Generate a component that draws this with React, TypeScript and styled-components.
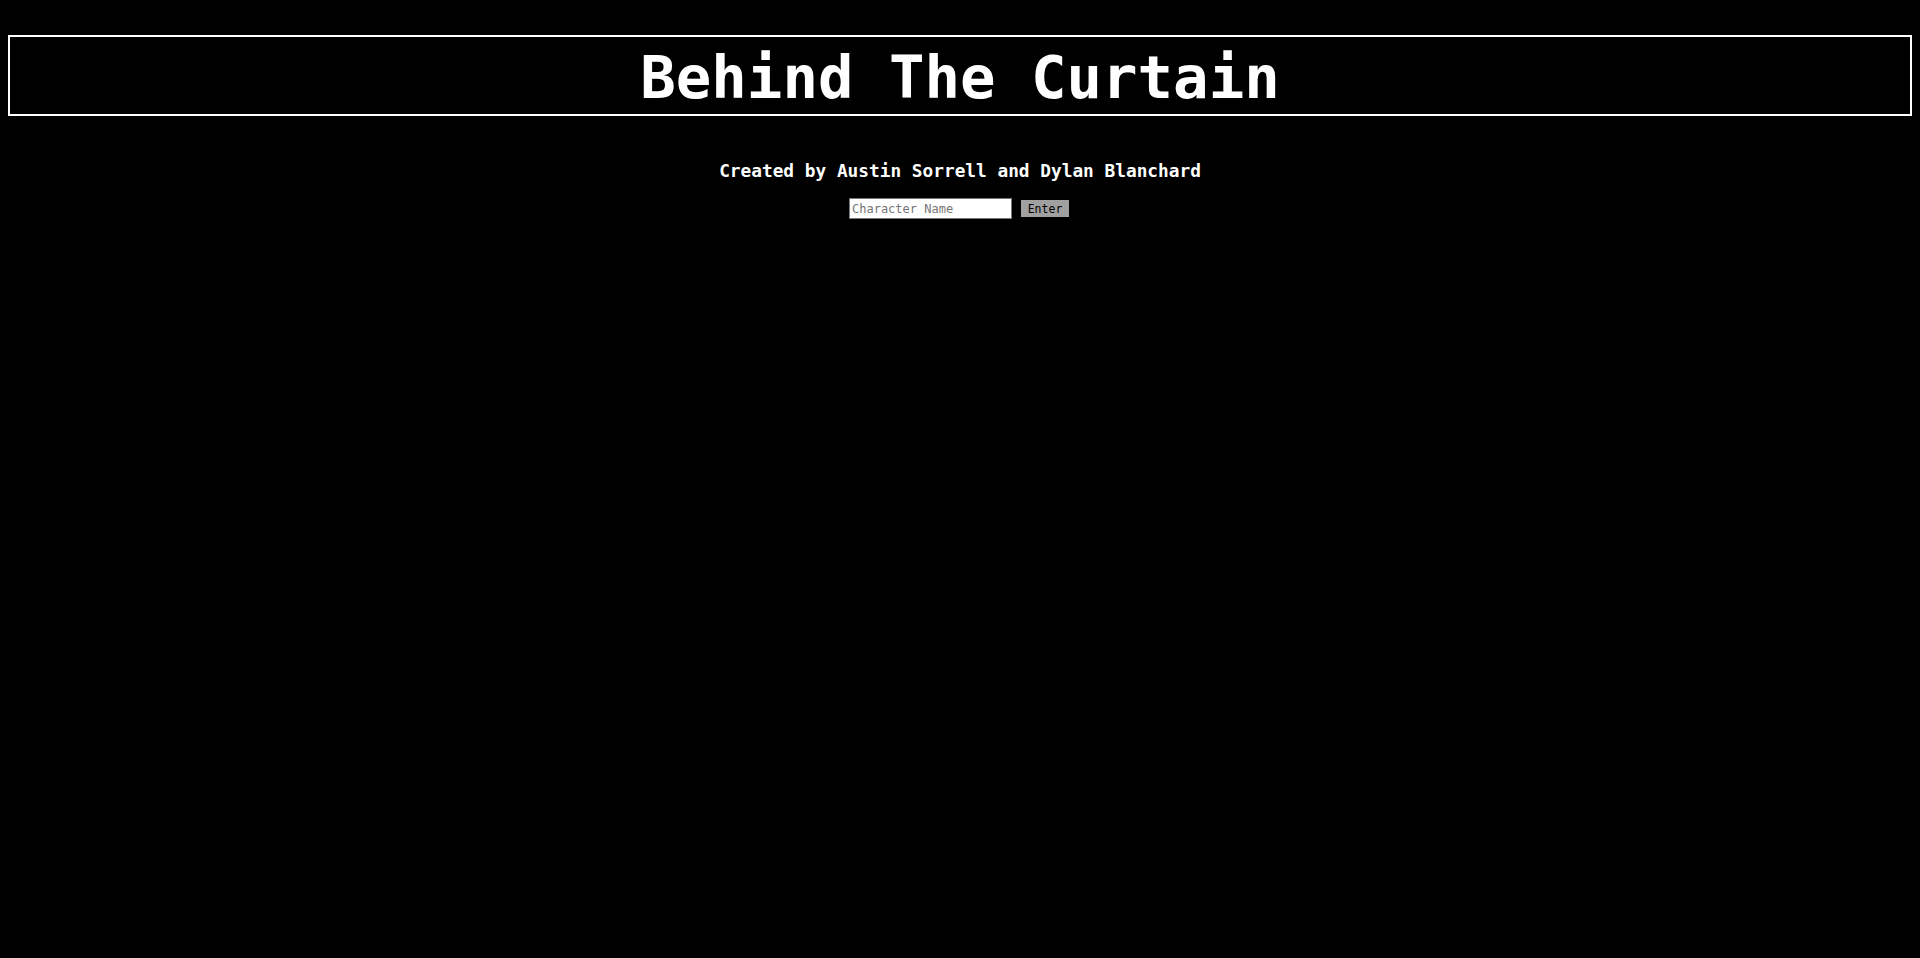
import React from "react";
import styled, { createGlobalStyle } from "styled-components";

const Global = createGlobalStyle`
  html, body { background: #000; }
  body { margin: 8px; color: #fff; font-family: "DejaVu Sans Mono", monospace; }
`;

const TitleBox = styled.h1`
  margin: 27px 0 0;
  padding-top: 4px;
  box-sizing: content-box;
  height: 73px;
  border: 2px solid #fff;
  display: flex;
  justify-content: center;
  line-height: 73px;
  font-weight: bold;
  font-size: 59px;
  font-family: "DejaVu Sans Mono", monospace;
  white-space: nowrap;
`;

const Credits = styled.h3`
  margin: 44px 0 0;
  text-align: center;
  font-size: 17.8px;
  line-height: 21px;
  font-weight: bold;
  font-family: "DejaVu Sans Mono", monospace;
`;

const Row = styled.form`
  margin-top: 17px;
  display: flex;
  justify-content: center;
  align-items: center;
  gap: 9px;
  padding-right: 2px;
`;

const NameInput = styled.input`
  box-sizing: border-box;
  width: 163px;
  height: 21px;
  border: 1px solid #767676;
  background: #fff;
  padding: 0 2px;
  font-family: "DejaVu Sans Mono", monospace;
  font-size: 12px;
  color: #000;
  outline: none;
  &::placeholder { color: #757575; }
`;

const EnterButton = styled.button`
  box-sizing: border-box;
  width: 48px;
  height: 17px;
  border: none;
  padding: 1px 0 0;
  background: #a0a0a0;
  color: #000;
  font-family: "DejaVu Sans Mono", monospace;
  font-size: 11.5px;
  line-height: 16px;
`;

export default function App() {
  return (
    <>
      <Global />
      <TitleBox>Behind The Curtain</TitleBox>
      <Credits>Created by Austin Sorrell and Dylan Blanchard</Credits>
      <Row onSubmit={(e) => e.preventDefault()}>
        <NameInput placeholder="Character Name" />
        <EnterButton type="submit">Enter</EnterButton>
      </Row>
    </>
  );
}
